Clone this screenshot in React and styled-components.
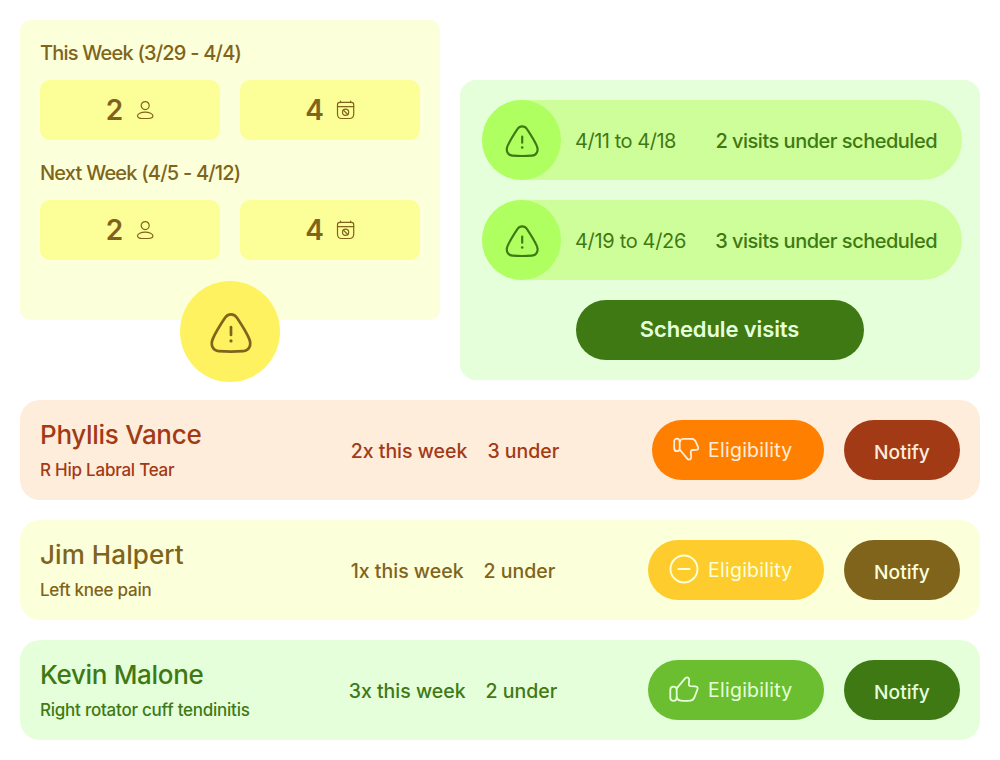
import React from "react";
import styled, { createGlobalStyle } from "styled-components";

const GlobalStyle = createGlobalStyle`
  *, *::before, *::after { box-sizing: border-box; }
  body {
    margin: 0;
    background: #ffffff;
    font-family: "Inter", "Liberation Sans", sans-serif;
    font-weight: 500;
  }
`;

const tones = {
  orange: { bg: "#FFEDDB", text: "#A23A16", pill: "#FF8000" },
  yellow: { bg: "#FBFFDA", text: "#80641C", pill: "#FFCC2D" },
  green: { bg: "#E5FFDB", text: "#3F7914", pill: "#6BBE30" }
};

const Page = styled.main`
  width: 1000px;
  height: 760px;
  padding: 20px;
  display: flex;
  flex-direction: column;
  gap: 20px;
`;

const Top = styled.section`
  height: 360px;
  display: grid;
  grid-template-columns: 420px 520px;
  column-gap: 20px;
`;

const WeekPanel = styled.div`
  position: relative;
  height: 300px;
  padding: 20px;
  display: flex;
  flex-direction: column;
  gap: 20px;
  border-radius: 10px;
  background: ${tones.yellow.bg};
  color: ${tones.yellow.text};
`;

const WeekTitle = styled.h2`
  margin: 0 0 14px;
  font-size: 20px;
  font-weight: 500;
  line-height: 26px;
  letter-spacing: -0.79px;
  white-space: nowrap;
`;

const Counts = styled.div`
  display: grid;
  grid-template-columns: 1fr 1fr;
  gap: 20px;
`;

const Count = styled.div`
  height: 60px;
  padding-left: 1px;
  display: flex;
  align-items: center;
  justify-content: center;
  gap: 12px;
  border-radius: 10px;
  background: #fcfe98;
  font-size: 28px;
  font-weight: 600;
  line-height: 60px;
`;

/* Hangs over the bottom edge of the week panel */
const WarningBadge = styled.div`
  position: absolute;
  left: 160px;
  bottom: -62px;
  width: 100px;
  height: 101px;
  padding: 3px 0 0 2px;
  display: flex;
  align-items: center;
  justify-content: center;
  border-radius: 50%;
  background: #fff261;
`;

const VisitsPanel = styled.div`
  height: 300px;
  margin-top: 60px;
  padding: 20px 18px 20px 22px;
  display: flex;
  flex-direction: column;
  gap: 20px;
  border-radius: 16px;
  background: ${tones.green.bg};
  color: ${tones.green.text};
`;

const VisitPill = styled.div`
  height: 80px;
  padding-right: 25px;
  display: flex;
  align-items: center;
  border-radius: 40px;
  background: #cefe99;
  font-size: 20px;
  line-height: 24px;
  white-space: nowrap;
`;

const VisitIcon = styled.div`
  width: 79px;
  height: 80px;
  padding: 2px 0 0 1px;
  display: flex;
  align-items: center;
  justify-content: center;
  border-radius: 50%;
  background: #aeff5f;
`;

const VisitDates = styled.span`
  padding-top: 2px;
  margin-left: 14px;
  font-weight: 400;
  letter-spacing: ${(p) => p.$tracking};
`;

const VisitStatus = styled.span`
  padding-top: 2px;
  margin-left: auto;
  letter-spacing: -0.5px;
`;

const ScheduleButton = styled.button`
  width: 288px;
  height: 60px;
  margin-left: 94px;
  padding: 0 1px 2px 0;
  border: 0;
  border-radius: 30px;
  background: ${tones.green.text};
  color: ${tones.green.bg};
  font: 600 22px/28px "Inter", sans-serif;
  letter-spacing: -0.12px;
`;

const PatientRow = styled.article`
  height: 100px;
  padding: 20px;
  display: flex;
  border-radius: 20px;
  background: ${(p) => p.$tone.bg};
  color: ${(p) => p.$tone.text};
  white-space: nowrap;
`;

const Identity = styled.div`
  width: 218px;
`;

const Name = styled.h3`
  margin: 0 0 9px;
  font-size: 26px;
  font-weight: 500;
  line-height: 29px;
  letter-spacing: ${(p) => p.$tracking};
`;

const Diagnosis = styled.p`
  margin: 0;
  font-size: 17px;
  line-height: 24px;
  letter-spacing: -0.24px;
`;

const Stats = styled.div`
  flex: 1;
  padding-top: 2px;
  display: flex;
  align-items: center;
  justify-content: center;
  gap: 20px;
  font-size: 19.5px;
`;

const Actions = styled.div`
  display: flex;
  gap: 20px;
`;

const Eligibility = styled.button`
  height: 60px;
  padding: 0 31px 0 20px;
  display: flex;
  align-items: center;
  gap: 8px;
  border: 0;
  border-radius: 30px;
  background: ${(p) => p.$tone.pill};
  color: ${(p) => p.$tone.bg};
  font: 400 19.5px/24px "Inter", sans-serif;
  letter-spacing: 0.25px;

  span {
    width: 85px;
    text-align: left;
  }
`;

const Notify = styled.button`
  width: 116px;
  height: 60px;
  padding: 3px 0 0;
  border: 0;
  border-radius: 30px;
  background: ${(p) => p.$tone.text};
  color: ${(p) => p.$tone.bg};
  font: 500 19.2px/24px "Inter", sans-serif;
`;

const Icon = styled.svg`
  flex: none;
  display: block;
  fill: none;
  stroke: currentColor;
  stroke-linecap: round;
  stroke-linejoin: round;
`;

function WarningIcon({ size }) {
  return (
    <Icon width={size} height={size} viewBox="0 0 48 48" strokeWidth="2.7">
      <path d="M18.2 8.6C20.9 4.3 27.1 4.3 29.8 8.6C34.5 15.6 39 22.7 42.1 29.6C45 36.2 42 41.7 36.2 42.1C28.2 42.7 19.8 42.7 11.8 42.1C6 41.7 3 36.2 5.9 29.6C9 22.7 13.5 15.6 18.2 8.6Z" />
      <path d="M24 18.2V26" />
      <circle cx="24" cy="31.9" r="1.6" fill="currentColor" stroke="none" />
    </Icon>
  );
}

function PersonIcon() {
  return (
    <Icon width="20" height="20" viewBox="0 0 20 20" strokeWidth="1.2">
      <circle cx="10.2" cy="5.6" r="4" />
      <path d="M10.2 12.1C14.4 12.1 17.9 13.9 17.9 15.8C17.9 17.7 15.6 18.5 13.4 18.5H7C4.8 18.5 2.5 17.7 2.5 15.8C2.5 13.9 6 12.1 10.2 12.1Z" />
    </Icon>
  );
}

function CalendarIcon() {
  return (
    <Icon width="20" height="20" viewBox="0 0 20 20" strokeWidth="1.2">
      <path d="M3.8 2.3H15.6C16.9 2.3 17.7 3.2 17.7 4.5V14C17.7 17.2 16.5 18.5 13.4 18.5H5.8C2.7 18.5 1.5 17.2 1.5 14V4.5C1.5 3.2 2.5 2.3 3.8 2.3Z" />
      <path d="M1.5 6.7H17.7M4.5 1.1V2.6M14.7 1.1V2.6" />
      <circle cx="9.6" cy="12.3" r="3.1" />
      <path d="M7.4 10.1L11.8 14.5" />
    </Icon>
  );
}

function ThumbDownIcon() {
  return (
    <Icon width="28" height="28" viewBox="-0.6 0 28 28" strokeWidth="1.8">
      <path d="M4.4 2.6C6.4 2.6 7.1 3.7 7.1 6V11.9C7.1 14.2 6.3 15.2 4.4 15.2C2.3 15.2 1.6 14.2 1.6 11.9V6C1.6 3.7 2.3 2.6 4.4 2.6Z" />
      <path d="M7.1 6C7.6 3.7 8.7 2.9 10.9 2.9H18.8C20.9 2.9 22.1 3.5 23 5.4L25.4 10.8C26.1 12.6 25.5 13.8 23.5 13.9L20 14C18.6 14.1 18 15 18.2 16.5L18.6 20.5C18.8 23.6 16.4 24.6 14.6 22.6L7.3 13.8" />
    </Icon>
  );
}

function MinusIcon() {
  return (
    <Icon width="32" height="32" viewBox="0 0 32 32" strokeWidth="1.9">
      <circle cx="16" cy="15" r="13.5" />
      <path d="M10.4 15H21.6" />
    </Icon>
  );
}

function ThumbUpIcon() {
  return (
    <Icon width="32" height="32" viewBox="0 0 32 32" strokeWidth="1.8">
      <path d="M5.4 12.6C7.7 12.6 8.7 13.7 8.7 16.1V23.4C8.7 25.8 7.7 26.8 5.4 26.8C3.1 26.8 2.3 25.8 2.3 23.4V16.1C2.3 13.7 3.1 12.6 5.4 12.6Z" />
      <path d="M8.9 14.1L16.9 4.6C18.8 2.4 21.6 3.5 21.2 6.4L20.8 9.7C20.6 11.2 21.2 12 22.6 12.1L27.1 12.3C29.4 12.4 30.2 13.6 29.4 15.6L26.5 23.2C25.5 25.6 24.6 26.5 22.2 26.7C19.2 27 16.2 27 13 26.7C10.6 26.5 9.4 25.6 8.7 23.2" />
    </Icon>
  );
}

const weeks = ["This Week (3/29 - 4/4)", "Next Week (4/5 - 4/12)"];

const visits = [
  { dates: "4/11 to 4/18", status: "2 visits under scheduled", tracking: "-0.47px" },
  { dates: "4/19 to 4/26", status: "3 visits under scheduled", tracking: "-0.33px" }
];

const patients = [
  {
    name: "Phyllis Vance",
    tracking: "-0.3px",
    diagnosis: "R Hip Labral Tear",
    weekly: "2x this week",
    under: "3 under",
    tone: tones.orange,
    EligibilityIcon: ThumbDownIcon
  },
  {
    name: "Jim Halpert",
    tracking: "0.08px",
    diagnosis: "Left knee pain",
    weekly: "1x this week",
    under: "2 under",
    tone: tones.yellow,
    EligibilityIcon: MinusIcon
  },
  {
    name: "Kevin Malone",
    tracking: "-0.33px",
    diagnosis: "Right rotator cuff tendinitis",
    weekly: "3x this week",
    under: "2 under",
    tone: tones.green,
    EligibilityIcon: ThumbUpIcon
  }
];

function Week({ title }) {
  return (
    <div>
      <WeekTitle>{title}</WeekTitle>
      <Counts>
        <Count>
          <span>2</span>
          <PersonIcon />
        </Count>
        <Count>
          <span>4</span>
          <CalendarIcon />
        </Count>
      </Counts>
    </div>
  );
}

function Patient({ patient }) {
  const { name, tracking, diagnosis, weekly, under, tone, EligibilityIcon } = patient;
  return (
    <PatientRow $tone={tone}>
      <Identity>
        <Name $tracking={tracking}>{name}</Name>
        <Diagnosis>{diagnosis}</Diagnosis>
      </Identity>
      <Stats>
        <span>{weekly}</span>
        <span>{under}</span>
      </Stats>
      <Actions>
        <Eligibility $tone={tone}>
          <EligibilityIcon />
          <span>Eligibility</span>
        </Eligibility>
        <Notify $tone={tone}>Notify</Notify>
      </Actions>
    </PatientRow>
  );
}

export default function App() {
  return (
    <>
      <GlobalStyle />
      <Page>
        <Top>
          <WeekPanel>
            {weeks.map((title) => (
              <Week key={title} title={title} />
            ))}
            <WarningBadge>
              <WarningIcon size={48} />
            </WarningBadge>
          </WeekPanel>
          <VisitsPanel>
            {visits.map((visit) => (
              <VisitPill key={visit.dates}>
                <VisitIcon>
                  <WarningIcon size={38.4} />
                </VisitIcon>
                <VisitDates $tracking={visit.tracking}>{visit.dates}</VisitDates>
                <VisitStatus>{visit.status}</VisitStatus>
              </VisitPill>
            ))}
            <ScheduleButton>Schedule visits</ScheduleButton>
          </VisitsPanel>
        </Top>
        {patients.map((patient) => (
          <Patient key={patient.name} patient={patient} />
        ))}
      </Page>
    </>
  );
}
